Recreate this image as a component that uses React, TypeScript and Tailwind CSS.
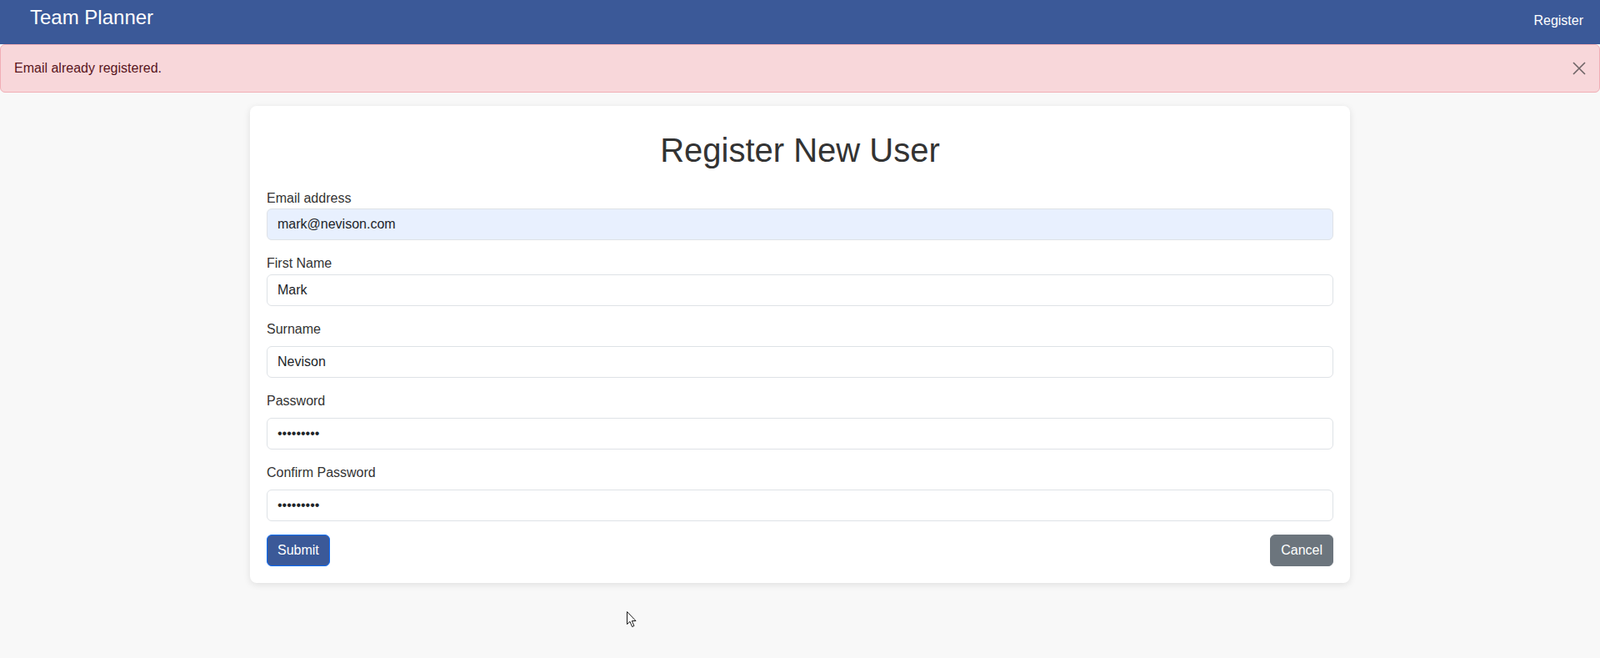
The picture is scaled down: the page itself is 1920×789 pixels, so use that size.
const fields = [
  { label: "First Name", value: "Mark", type: "text", gap: "mb-px" },
  { label: "Surname", value: "Nevison", type: "text", gap: "mb-2" },
  { label: "Password", value: "123456789", type: "password", gap: "mb-2" },
  { label: "Confirm Password", value: "123456789", type: "password", gap: "mb-2" },
];

const inputClass =
  "block h-[38px] w-full rounded-[6px] border border-[#dee2e6] px-3 text-[16px] leading-6 text-[#212529] outline-none";

export default function App() {
  return (
    <div
      className="relative min-h-screen bg-[#f8f8f8] text-[#333]"
      style={{ fontFamily: '"Liberation Sans", Arial, sans-serif' }}
    >
      {/* Navbar */}
      <header className="flex h-[53px] items-start justify-between bg-[#3b5998] text-white">
        <a className="pl-[36px] pt-[3px] text-[24px] leading-9">Team Planner</a>
        <a className="pr-5 pt-[13px] text-[16px] leading-6">Register</a>
      </header>

      {/* Alert */}
      <div className="mb-4 flex items-center justify-between rounded-[6px] border border-[#f1aeb5] bg-[#f8d7da] px-4 py-4 text-[16px] leading-6 text-[#58151c]">
        <span>Email already registered.</span>
        <button type="button" aria-label="Close" className="flex size-4 items-center justify-center">
          <svg viewBox="0 0 16 16" className="size-4" fill="none" stroke="#6e6466" strokeWidth="1.6">
            <path d="M1 1l14 14M15 1L1 15" />
          </svg>
        </button>
      </div>

      {/* Card */}
      <div className="mx-auto w-[1320px] rounded-lg bg-white p-5 shadow-[0_2px_8px_rgba(0,0,0,0.1)]">
        <h1 className="mb-[22px] mt-[9px] text-center text-[40px] leading-[48px] text-[#333]">
          Register New User
        </h1>

        <label className="block text-[16px] leading-6">Email address</label>
        <input
          readOnly
          type="email"
          defaultValue="mark@nevison.com"
          className={inputClass + " bg-[#e8f0fe]"}
        />

        {fields.map((f) => (
          <div key={f.label} className="mt-4">
            <label className={"block text-[16px] leading-6 " + f.gap}>{f.label}</label>
            <input readOnly type={f.type} defaultValue={f.value} className={inputClass + " bg-white"} />
          </div>
        ))}

        <div className="mt-4 flex justify-between">
          <button
            type="button"
            className="h-[38px] rounded-[6px] border border-[#0d6efd] bg-[#3b5998] px-3 text-[16px] leading-6 text-white"
          >
            Submit
          </button>
          <button
            type="button"
            className="h-[38px] rounded-[6px] border border-[#6c757d] bg-[#6c757d] px-3 text-[16px] leading-6 text-white"
          >
            Cancel
          </button>
        </div>
      </div>

      {/* Mouse pointer */}
      <svg
        className="absolute left-[752px] top-[733px]"
        width="13"
        height="20"
        viewBox="0 0 13 20"
      >
        <path
          d="M0.5 0.5 L0.5 15.5 L4 12.3 L6.6 18.5 L8.9 17.5 L6.3 11.5 L11 11.5 Z"
          fill="white"
          stroke="#1a1a1a"
          strokeWidth="1"
          strokeLinejoin="round"
        />
      </svg>
    </div>
  );
}
